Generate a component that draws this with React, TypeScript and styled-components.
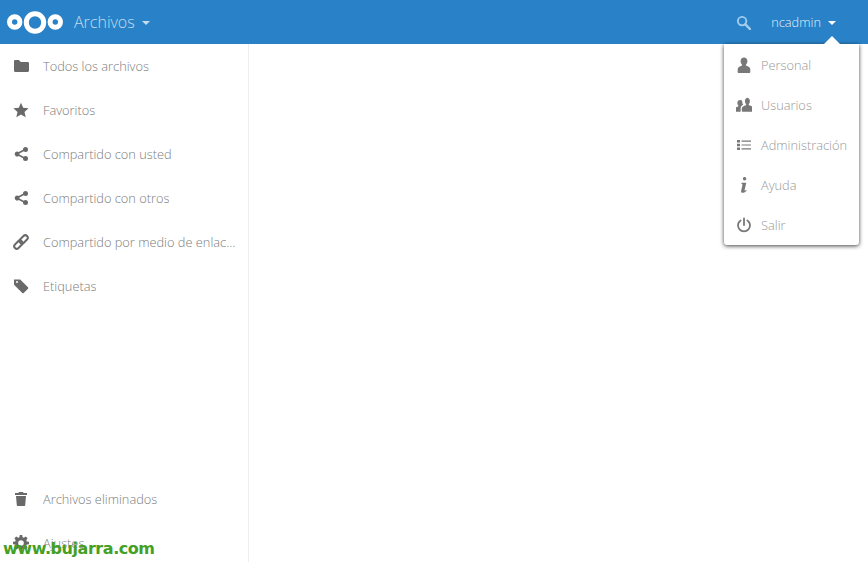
import React from "react";
import styled, { createGlobalStyle } from "styled-components";

const GlobalStyle = createGlobalStyle`
  html, body {
    margin: 0;
    padding: 0;
    height: 100%;
    background-color: #ffffff;
  }
  #root {
    height: 100%;
  }
`;

const Page = styled.div`
  position: relative;
  display: flex;
  flex-direction: column;
  width: 868px;
  height: 562px;
  overflow: hidden;
  font-family: "Open Sans", "Liberation Sans", sans-serif;
  font-weight: 300;
  background-color: #ffffff;
`;

const Header = styled.header`
  display: flex;
  flex: none;
  align-items: center;
  height: 44px;
  padding: 0 32px 0 7px;
  background-color: #2982c7;
`;

const AppName = styled.div`
  display: flex;
  align-items: center;
  margin-left: 9px;
  font-size: 16px;
  color: rgba(255, 255, 255, 0.72);
`;

const Caret = styled.span<{ $bright?: boolean }>`
  width: 0;
  height: 0;
  margin-left: 7px;
  margin-top: 2px;
  border-left: 4px solid transparent;
  border-right: 4px solid transparent;
  border-top: 4px solid ${(p) => (p.$bright ? "#ffffff" : "rgba(255, 255, 255, 0.72)")};
`;

const HeaderRight = styled.div`
  display: flex;
  align-items: center;
  margin-left: auto;
`;

const SearchIcon = styled.svg`
  width: 15px;
  height: 15px;
  margin-right: 20px;
  fill: none;
  stroke: #a3cdee;
`;

const UserName = styled.div`
  display: flex;
  align-items: center;
  font-size: 12.8px;
  color: rgba(255, 255, 255, 0.9);
`;

const Body = styled.div`
  display: flex;
  flex: 1;
  min-height: 0;
`;

const Sidebar = styled.nav`
  display: flex;
  flex-direction: column;
  justify-content: space-between;
  width: 248px;
  border-right: 1px solid #eeeeee;
`;

const NavGroup = styled.div<{ $overflow?: boolean }>`
  display: flex;
  flex-direction: column;
  margin-bottom: ${(p) => (p.$overflow ? "-3px" : "0")};
`;

const NavItem = styled.div`
  display: flex;
  align-items: center;
  height: 44px;
  padding-left: 13px;
  font-size: 12.8px;
  color: #7c7c7c;
`;

const NavLabel = styled.span`
  margin-left: 14px;
  max-width: 194px;
  overflow: hidden;
  white-space: nowrap;
  text-overflow: ellipsis;
`;

const Icon = styled.svg`
  flex: none;
  width: 16px;
  height: 16px;
  fill: #696969;
`;

const Menu = styled.div`
  position: absolute;
  top: 44px;
  left: 724px;
  display: flex;
  flex-direction: column;
  width: 135px;
  padding-top: 1px;
  background-color: #ffffff;
  border-radius: 0 0 3px 3px;
  box-shadow: 0 1px 4px rgba(0, 0, 0, 0.75);

  &::before {
    content: "";
    position: absolute;
    top: -8px;
    left: 100px;
    border-left: 8px solid transparent;
    border-right: 8px solid transparent;
    border-bottom: 8px solid #ffffff;
  }
`;

const MenuItem = styled.div`
  display: flex;
  align-items: center;
  height: 40px;
  padding-left: 12px;
  font-size: 12.8px;
  color: #989898;
`;

const MenuLabel = styled.span`
  margin-left: 9px;
  white-space: nowrap;
`;

const MenuIcon = styled(Icon)`
  fill: #787878;
`;

const Watermark = styled.div`
  position: absolute;
  left: 3px;
  bottom: 3px;
  font-family: "DejaVu Sans", sans-serif;
  font-size: 16px;
  font-weight: 700;
  line-height: 20px;
  letter-spacing: -0.45px;
  color: #43a024;
`;

const Logo = () => (
  <svg width="58" height="28" viewBox="0 0 58 28" fill="none" stroke="#ffffff" aria-hidden>
    <circle cx="7.700" cy="14" r="5.200" strokeWidth="5" />
    <circle cx="28" cy="14.500" r="8.700" strokeWidth="5" />
    <circle cx="48.300" cy="14" r="5.200" strokeWidth="5" />
  </svg>
);

const icons: Record<string, React.ReactNode> = {
  folder: <path d="M1 3.200C1 2.500 1.500 2 2.200 2h3.600l2 2h6.900c.7 0 1.300.5 1.300 1.200v7.600c0 .7-.6 1.200-1.300 1.200H2.200C1.500 14 1 13.500 1 12.800z" />,
  star: <path d="M8 .8l2.200 5 5.400.5-4.100 3.600 1.200 5.300L8 12.400 3.300 15.200l1.200-5.300L.4 6.300l5.400-.5z" />,
  share: <path d="M12.500 1a2.500 2.500 0 0 1 0 5c-.7 0-1.300-.3-1.800-.7L6.400 7.500a2.500 2.500 0 0 1 0 1l4.300 2.200c.5-.4 1.100-.7 1.800-.7a2.500 2.500 0 1 1-2.500 2.500v-.3L5.700 10a2.500 2.500 0 1 1 0-4l4.300-2.200v-.3A2.500 2.500 0 0 1 12.500 1z" />,
  link: (
    <g fill="none" stroke="#696969" strokeWidth="2" transform="rotate(-45 8 8)">
      <rect x="-0.500" y="5.500" width="9.500" height="5" rx="2.500" />
      <rect x="7" y="5.500" width="9.500" height="5" rx="2.500" />
    </g>
  ),
  tag: <path d="M1 1.500h6.200L15 9.300c.4.4.4 1 0 1.400l-4.300 4.300c-.4.4-1 .4-1.400 0L1.500 7.200C1.200 7 1 6.600 1 6.300zM4 3a1 1 0 1 0 0 2 1 1 0 0 0 0-2z" fillRule="evenodd" />,
  trash: <path d="M6 1h4l.6 1H14v2H2V2h3.400zM3 5h10l-.8 9.200c0 .5-.5.8-1 .8H4.800c-.5 0-1-.3-1-.8z" />,
  gear: <path fillRule="evenodd" d="M6.800 0h2.400l.4 2.200 1.200.5L12.700 1.400l1.900 1.900-1.300 1.900.5 1.200 2.200.4v2.400l-2.200.4-.5 1.200 1.300 1.900-1.900 1.900-1.900-1.300-1.200.5L9.200 16H6.800l-.4-2.200-1.200-.5-1.900 1.300-1.900-1.900 1.300-1.900-.5-1.200L0 9.200V6.800l2.200-.4.5-1.200L1.400 3.300l1.900-1.900 1.900 1.300 1.200-.5zM8 5.200a2.800 2.800 0 1 0 0 5.600 2.800 2.800 0 0 0 0-5.600z" />,
  user: <path d="M8 .4c2.100 0 3.400 1.600 3.400 3.700 0 1.400-.5 2.700-1.300 3.500-.3.400-.2 1 .3 1.200 1.800.7 3.900 1.600 3.900 3.300V15c0 .5-.4 1-1 1H2.700c-.6 0-1-.5-1-1v-2.900c0-1.700 2.100-2.600 3.900-3.300.5-.2.6-.8.300-1.200C5.100 6.800 4.600 5.500 4.600 4.100 4.600 2 5.900.4 8 .4z" />,
  users: (
    <g transform="translate(-1 -1) scale(1.130)">
      <path d="M10.500 1.500c1.700 0 2.700 1.300 2.700 3 0 1.100-.4 2.100-1 2.700-.2.300-.1.800.3 1 1.400.6 3.500 1.200 3.500 2.600V13c0 .5-.4 1-.9 1H6.900c-.5 0-.9-.5-.9-1v-2.200c0-1.400 2.100-2 3.500-2.600.4-.2.500-.7.300-1-.6-.6-1-1.600-1-2.700 0-1.700 1-3 2.700-3zM4.700 3.500c.7 0 1.300.3 1.700.7-.2 1.300.1 2.500.8 3.300-.5.800-2.200 1.300-2.200 3.300V14H.8c-.5 0-.8-.4-.8-.9v-1.800c0-1.200 1.500-1.600 2.700-2.100.3-.2.400-.6.200-.9-.5-.5-.8-1.300-.8-2.200 0-1.500.9-2.600 2.600-2.600z" />
    </g>
  ),
  list: <path d="M1 3h3v2.500H1zM1 6.800h3v2.500H1zM1 10.500h3V13H1zM5.500 3.500H15v1.200H5.500zM5.500 7.400H15v1.200H5.500zM5.500 11.200H15v1.200H5.500z" />,
  info: (
    <g transform="translate(-1.200 -1.400) scale(1.150)">
      <path d="M8.500 1.200a1.500 1.500 0 1 1 0 3 1.500 1.500 0 0 1 0-3zM6 6.300h4L8.500 12.500c-.1.500.3.600.7.400l.9-.5.2.6C9.300 14.200 8 15 6.800 15c-1.100 0-1.500-.7-1.300-1.700L6.700 8c.1-.5-.4-.7-1-.6z" />
    </g>
  ),
  power: (
    <g fill="none" stroke="#787878" strokeWidth="1.800" strokeLinecap="round">
      <path d="M8 1.500V8" />
      <path d="M4.600 3.500a6 6 0 1 0 6.800 0" />
    </g>
  ),
};

const navTop = [
  { icon: "folder", label: "Todos los archivos" },
  { icon: "star", label: "Favoritos" },
  { icon: "share", label: "Compartido con usted" },
  { icon: "share", label: "Compartido con otros" },
  { icon: "link", label: "Compartido por medio de enlaces" },
  { icon: "tag", label: "Etiquetas" },
];

const navBottom = [
  { icon: "trash", label: "Archivos eliminados" },
  { icon: "gear", label: "Ajustes" },
];

const menuItems = [
  { icon: "user", label: "Personal" },
  { icon: "users", label: "Usuarios" },
  { icon: "list", label: "Administración" },
  { icon: "info", label: "Ayuda" },
  { icon: "power", label: "Salir" },
];

export default function App() {
  return (
    <Page>
      <GlobalStyle />
      <Header>
        <Logo />
        <AppName>
          Archivos
          <Caret />
        </AppName>
        <HeaderRight>
          <SearchIcon viewBox="0 0 16 16" aria-hidden>
            <circle cx="6.500" cy="6.500" r="4.500" strokeWidth="2" />
            <path d="M10 10l5 5" strokeWidth="2.600" strokeLinecap="round" />
          </SearchIcon>
          <UserName>
            ncadmin
            <Caret $bright />
          </UserName>
        </HeaderRight>
      </Header>
      <Body>
        <Sidebar>
          <NavGroup>
            {navTop.map((item) => (
              <NavItem key={item.label}>
                <Icon viewBox="0 0 16 16">{icons[item.icon]}</Icon>
                <NavLabel>{item.label}</NavLabel>
              </NavItem>
            ))}
          </NavGroup>
          <NavGroup $overflow>
            {navBottom.map((item) => (
              <NavItem key={item.label}>
                <Icon viewBox="0 0 16 16">{icons[item.icon]}</Icon>
                <NavLabel>{item.label}</NavLabel>
              </NavItem>
            ))}
          </NavGroup>
        </Sidebar>
      </Body>
      <Menu>
        {menuItems.map((item) => (
          <MenuItem key={item.label}>
            <MenuIcon viewBox="0 0 16 16">{icons[item.icon]}</MenuIcon>
            <MenuLabel>{item.label}</MenuLabel>
          </MenuItem>
        ))}
      </Menu>
      <Watermark>www.bujarra.com</Watermark>
    </Page>
  );
}
